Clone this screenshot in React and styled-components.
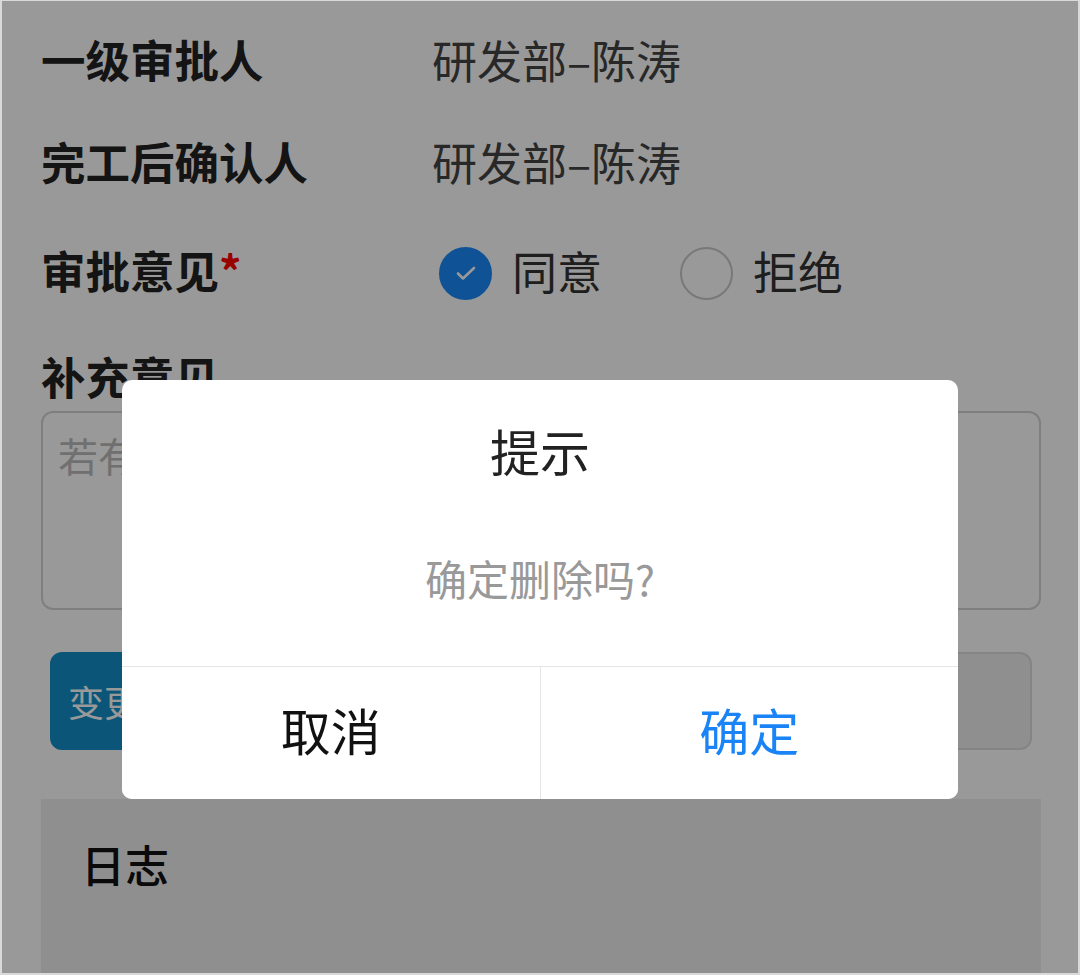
import styled, { createGlobalStyle } from "styled-components";

const GlobalStyle = createGlobalStyle`
  html, body {
    margin: 0;
    background: #d9d9d9;
  }
  body {
    font-family: "Noto Sans CJK SC", "Noto Sans", sans-serif;
  }
  * {
    box-sizing: border-box;
  }
`;

const Screen = styled.div`
  position: relative;
  margin: 1px 2px 0;
  height: 972px;
  overflow: hidden;
  background: #fff;
`;

const Form = styled.div`
  padding: 7px 37px 0 39px;
`;

const Row = styled.div`
  display: flex;
  align-items: center;
  height: ${(p) => p.$height || 102}px;
`;

const Label = styled.div`
  width: 391px;
  flex-shrink: 0;
  font-size: 44.5px;
  font-weight: 700;
  line-height: 1;
  color: #222;
`;

const Required = styled.span`
  color: #f00;
  font-weight: 700;
`;

const Value = styled.div`
  font-size: 45px;
  line-height: 1;
  color: #444;
`;

const RadioGroup = styled.div`
  display: flex;
  align-items: center;
  padding-left: 7px;
`;

const RadioOption = styled.label`
  display: flex;
  align-items: center;
  gap: 20px;
  margin-right: 78px;
  font-size: 45px;
  line-height: 1;
  color: #333;
`;

const RadioIcon = styled.span`
  width: 53px;
  height: 53px;
  margin-top: 6px;
  border-radius: 50%;
  display: flex;
  align-items: center;
  justify-content: center;
  background: ${(p) => (p.$checked ? "#1989fa" : "#fff")};
  border: 2px solid ${(p) => (p.$checked ? "#1989fa" : "#c8c9cc")};
`;

const SectionTitle = styled.div`
  margin-top: 22px;
  font-size: 44.5px;
  font-weight: 700;
  line-height: 52px;
  color: #222;
`;

const Remark = styled.textarea`
  display: block;
  width: 100%;
  height: 199px;
  margin-top: 9px;
  padding: 14px 15px;
  border: 2px solid #d4d4d4;
  border-radius: 12px;
  resize: none;
  font-family: inherit;
  font-size: 40px;
  line-height: 1.4;
  color: #333;
  background: #fff;
  &::placeholder {
    color: #bbb;
  }
`;

const Actions = styled.div`
  display: flex;
  gap: 24px;
  margin-top: 42px;
  padding: 0 9px;
  height: 98px;
`;

const ActionButton = styled.button`
  height: 100%;
  padding: 0 16px;
  border-radius: 12px;
  font-family: inherit;
  font-size: 36px;
  flex: ${(p) => (p.$primary ? "0 0 auto" : "1")};
  color: ${(p) => (p.$primary ? "#fff" : "#333")};
  background: ${(p) => (p.$primary ? "#138fc9" : "#eee")};
  border: 2px solid ${(p) => (p.$primary ? "#138fc9" : "#ddd")};
`;

const LogPanel = styled.div`
  margin-top: 49px;
  height: 300px;
  padding: 39px 40px;
  background: #eee;
`;

const LogTitle = styled.div`
  font-size: 44px;
  font-weight: 500;
  line-height: 1.2;
  color: #111;
`;

const Overlay = styled.div`
  position: absolute;
  inset: 0;
  display: flex;
  justify-content: center;
  align-items: flex-start;
  padding-top: 379px;
  background: rgba(0, 0, 0, 0.4);
`;

const Dialog = styled.div`
  width: 836px;
  background: #fff;
  border-radius: 10px;
  overflow: hidden;
`;

const DialogBody = styled.div`
  padding: 41px 24px 64px;
  text-align: center;
`;

const DialogTitle = styled.div`
  font-size: 50px;
  line-height: 58px;
  color: #222;
`;

const DialogMessage = styled.div`
  margin-top: 75px;
  font-size: 42px;
  line-height: 48px;
  color: #999;
`;

const DialogFooter = styled.div`
  display: flex;
  height: 133px;
  border-top: 1px solid #e5e5e5;
`;

const DialogButton = styled.button`
  flex: 1;
  padding: 0 0 8px;
  border: none;
  background: #fff;
  font-family: inherit;
  font-size: 50px;
  color: ${(p) => (p.$confirm ? "#1a84f6" : "#111")};
  & + & {
    border-left: 1px solid #e5e5e5;
  }
`;

function CheckMark() {
  return (
    <svg width="24" height="24" viewBox="0 0 24 24" fill="none">
      <path
        d="M4 12.5l5 5L20 7"
        stroke="#fff"
        strokeWidth="2.6"
        strokeLinecap="round"
        strokeLinejoin="round"
      />
    </svg>
  );
}

export default function App() {
  return (
    <>
      <GlobalStyle />
      <Screen>
        <Form>
          <Row>
            <Label>一级审批人</Label>
            <Value>研发部–陈涛</Value>
          </Row>
          <Row>
            <Label>完工后确认人</Label>
            <Value>研发部–陈涛</Value>
          </Row>
          <Row $height={116}>
            <Label>
              审批意见<Required>*</Required>
            </Label>
            <RadioGroup>
              <RadioOption>
                <RadioIcon $checked>
                  <CheckMark />
                </RadioIcon>
                同意
              </RadioOption>
              <RadioOption>
                <RadioIcon />
                拒绝
              </RadioOption>
            </RadioGroup>
          </Row>
          <SectionTitle>补充意见</SectionTitle>
          <Remark placeholder="若有补充意见请填写" />
          <Actions>
            <ActionButton $primary>变更审批人</ActionButton>
            <ActionButton>提交</ActionButton>
          </Actions>
          <LogPanel>
            <LogTitle>日志</LogTitle>
          </LogPanel>
        </Form>

        <Overlay>
          <Dialog>
            <DialogBody>
              <DialogTitle>提示</DialogTitle>
              <DialogMessage>确定删除吗?</DialogMessage>
            </DialogBody>
            <DialogFooter>
              <DialogButton>取消</DialogButton>
              <DialogButton $confirm>确定</DialogButton>
            </DialogFooter>
          </Dialog>
        </Overlay>
      </Screen>
    </>
  );
}
